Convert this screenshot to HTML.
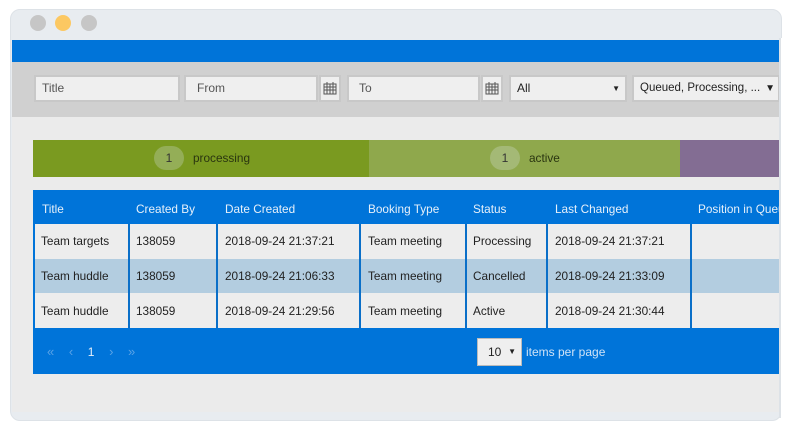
<!DOCTYPE html><html><head><style>
body{margin:0;width:800px;height:412px;background:#fff;font-family:"Liberation Sans",sans-serif;position:relative;overflow:hidden}
.a{position:absolute}
.win{left:10px;top:9px;width:770px;height:410px;background:#e8ecf0;border-radius:10px;border:1px solid #dde2e7}
.dot{width:16px;height:16px;border-radius:50%;top:15px}
.inp{top:75px;background:#efefef;border:2px solid #c8c8c8;font-size:12px;color:#555;line-height:23px;padding-left:6px;box-sizing:border-box;height:27px;white-space:nowrap;overflow:hidden}
.cal{top:75px;width:22px;height:27px;background:#efefef;border:2px solid #c8c8c8;box-sizing:border-box}
.t{font-size:11.8px;color:#222}
.h{font-size:11.8px;color:#e6f0fa;top:202px;white-space:nowrap}
.vl{width:2px;background:#0a6fc8;top:224px;height:104px}
</style></head><body>
<div class="a win"></div>
<div class="a dot" style="left:30px;background:#c6c6c6"></div>
<div class="a dot" style="left:55px;background:#fcc862"></div>
<div class="a dot" style="left:81px;background:#c6c6c6"></div>
<div class="a" style="left:12px;top:40px;width:768px;height:22px;background:#0074d9"></div>
<div class="a" style="left:12px;top:62px;width:768px;height:55px;background:#d0d0d0"></div>
<div class="a" style="left:12px;top:117px;width:768px;height:295px;background:#ebebeb"></div>
<div class="a inp" style="left:34px;width:146px">Title</div>
<div class="a inp" style="left:184px;width:134px;padding-left:11px">From</div>
<div class="a cal" style="left:319px"><svg width="18" height="23"><rect x="3" y="7" width="12" height="10" fill="none" stroke="#555"/><path d="M3 10h12M3 13h12M6 7v10M9 7v10M12 7v10M6 5v3M12 5v3" stroke="#555"/></svg></div>
<div class="a inp" style="left:347px;width:133px;padding-left:10px">To</div>
<div class="a cal" style="left:481px"><svg width="18" height="23"><rect x="3" y="7" width="12" height="10" fill="none" stroke="#555"/><path d="M3 10h12M3 13h12M6 7v10M9 7v10M12 7v10M6 5v3M12 5v3" stroke="#555"/></svg></div>
<div class="a inp" style="left:509px;width:118px;color:#222">All<span class="a" style="right:5px;top:0;font-size:8px">▼</span></div>
<div class="a inp" style="left:632px;width:148px;color:#222;font-size:11.5px">Queued, Processing, ...<span class="a" style="right:3px;top:0;font-size:10px">▼</span></div>
<div class="a" style="left:33px;top:140px;width:336px;height:37px;background:#7a9a20"></div>
<div class="a" style="left:369px;top:140px;width:311px;height:37px;background:#8fa84c"></div>
<div class="a" style="left:680px;top:140px;width:100px;height:37px;background:#836d93"></div>
<div class="a" style="left:154px;top:146px;width:30px;height:24px;border-radius:12px;background:#94ae57;text-align:center;line-height:24px;font-size:12px;color:#333">1</div>
<div class="a t" style="left:193px;top:151px;color:#2a3510">processing</div>
<div class="a" style="left:490px;top:146px;width:30px;height:24px;border-radius:12px;background:#a4b976;text-align:center;line-height:24px;font-size:12px;color:#333">1</div>
<div class="a t" style="left:529px;top:151px;color:#2a3510">active</div>
<div class="a" style="left:33px;top:190px;width:747px;height:184px;background:#0074d9"></div>
<div class="a" style="left:35px;top:224px;width:745px;height:35px;background:#ededed"></div>
<div class="a" style="left:35px;top:259px;width:745px;height:34px;background:#b3cde0"></div>
<div class="a" style="left:35px;top:293px;width:745px;height:35px;background:#ededed"></div>
<div class="a vl" style="left:128px"></div><div class="a vl" style="left:216px"></div><div class="a vl" style="left:359px"></div><div class="a vl" style="left:465px"></div><div class="a vl" style="left:546px"></div><div class="a vl" style="left:690px"></div>
<div class="a h" style="left:42px">Title</div><div class="a h" style="left:136px">Created By</div><div class="a h" style="left:225px">Date Created</div><div class="a h" style="left:368px">Booking Type</div><div class="a h" style="left:473px">Status</div><div class="a h" style="left:555px">Last Changed</div><div class="a h" style="left:698px">Position in Queue</div>
<div class="a" style="left:780px;top:38px;width:20px;height:380px;background:#fff"></div>
<div class="a" style="left:779px;top:38px;width:2px;height:380px;background:#dde2e7"></div>
<div class="a t" style="left:41px;top:234px">Team targets</div><div class="a t" style="left:136px;top:234px">138059</div><div class="a t" style="left:225px;top:234px">2018-09-24 21:37:21</div><div class="a t" style="left:368px;top:234px">Team meeting</div><div class="a t" style="left:473px;top:234px">Processing</div><div class="a t" style="left:555px;top:234px">2018-09-24 21:37:21</div>
<div class="a t" style="left:41px;top:269px">Team huddle</div><div class="a t" style="left:136px;top:269px">138059</div><div class="a t" style="left:225px;top:269px">2018-09-24 21:06:33</div><div class="a t" style="left:368px;top:269px">Team meeting</div><div class="a t" style="left:473px;top:269px">Cancelled</div><div class="a t" style="left:555px;top:269px">2018-09-24 21:33:09</div>
<div class="a t" style="left:41px;top:304px">Team huddle</div><div class="a t" style="left:136px;top:304px">138059</div><div class="a t" style="left:225px;top:304px">2018-09-24 21:29:56</div><div class="a t" style="left:368px;top:304px">Team meeting</div><div class="a t" style="left:473px;top:304px">Active</div><div class="a t" style="left:555px;top:304px">2018-09-24 21:30:44</div>
<div class="a" style="left:47px;top:344px;font-size:13px;color:#5aa3e6;word-spacing:11px">« ‹ <span style="color:#e6f0fa;font-size:12px">1</span> › »</div>
<div class="a" style="left:477px;top:338px;width:45px;height:28px;background:#efefef;border:1px solid #bbb;box-sizing:border-box;font-size:12px;line-height:26px;padding-left:10px;color:#222">10<span class="a" style="right:5px;font-size:8px">▼</span></div>
<div class="a" style="left:526px;top:345px;font-size:12px;color:#cfe3f7">items per page</div>
</body></html>
